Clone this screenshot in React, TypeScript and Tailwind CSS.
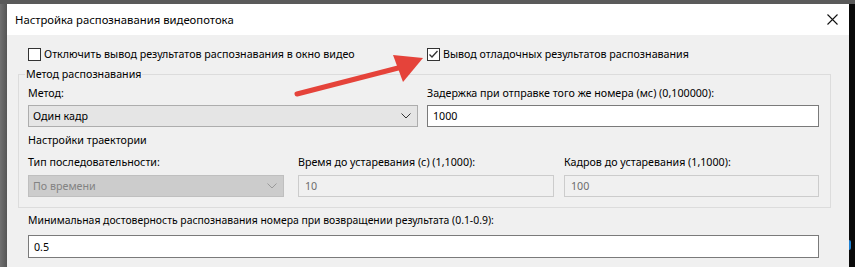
function Chevron({ color }: { color: string }) {
  return (
    <svg width="10" height="6" viewBox="0 0 10 6" className="shrink-0">
      <path d="M0.5 0.5 L5 5 L9.5 0.5" fill="none" stroke={color} strokeWidth="1" />
    </svg>
  );
}

function Check({ checked }: { checked?: boolean }) {
  return (
    <div className="w-[13px] h-[13px] border border-[#333333] bg-white flex items-center justify-center shrink-0">
      {checked && (
        <svg width="11" height="11" viewBox="0 0 11 11">
          <path d="M1.5 5.5 L4 8 L9.5 2" fill="none" stroke="#333333" strokeWidth="1.3" />
        </svg>
      )}
    </div>
  );
}

export default function App() {
  return (
    <div className="relative w-[855px] h-[267px] overflow-hidden bg-[#5a5a5a] font-['Noto_Sans',sans-serif] text-[10.7px] leading-[16px] text-black">
      <div className="h-[4px] bg-[#5a5a5a]" />
      <div className="flex h-[263px]">
        <div className="w-[7px] bg-gradient-to-r from-[#707070] to-[#555555]" />
        <div className="w-[842px] flex flex-col bg-[#f0f0f0]">
          {/* title bar */}
          <div className="h-[31px] bg-white flex items-center justify-between pl-[8px] pr-[11px] shrink-0">
            <span className="text-[11.3px]">Настройка распознавания видеопотока</span>
            <svg width="11" height="11" viewBox="0 0 11 11">
              <path d="M0.5 0.5 L10.5 10.5 M10.5 0.5 L0.5 10.5" stroke="#111" strokeWidth="1.1" />
            </svg>
          </div>

          {/* checkboxes */}
          <div className="flex items-center h-[16px] mt-[11px]">
            <div className="flex items-center gap-[3px] pl-[21px] w-[420px]">
              <Check />
              <span>Отключить вывод результатов распознавания в окно видео</span>
            </div>
            <div className="flex items-center gap-[3px]">
              <Check checked />
              <span>Вывод отладочных результатов распознавания</span>
            </div>
          </div>

          {/* group */}
          <fieldset className="ml-[11px] mt-[4px] w-[813px] border border-[#dcdcdc] pl-[9px] pr-[11px] pt-[3px] pb-[10px]">
            <legend className="px-[1px] -ml-[3px] leading-[16px]">Метод распознавания</legend>
            <div className="flex gap-[9px]">
              <div className="w-[390px] flex flex-col">
                <span>Метод:</span>
                <div className="mt-[4px] h-[22px] bg-[#e5e5e5] border border-[#adadad] flex items-center justify-between pl-[4px] pr-[6px]">
                  <span>Один кадр</span>
                  <Chevron color="#333333" />
                </div>
              </div>
              <div className="w-[392px] flex flex-col">
                <span>Задержка при отправке того же номера (мс) (0,100000):</span>
                <div className="mt-[4px] h-[22px] bg-white border border-[#7a7a7a] flex items-center pl-[5px]">
                  <span>1000</span>
                </div>
              </div>
            </div>
            <div className="mt-[5px]">Настройки траектории</div>
            <div className="mt-[6px] flex">
              <div className="w-[256px] flex flex-col">
                <span>Тип последовательности:</span>
                <div className="mt-[5px] h-[22px] bg-[#cccccc] border border-[#bfbfbf] flex items-center justify-between pl-[4px] pr-[6px] text-[#838383]">
                  <span>По времени</span>
                  <Chevron color="#9a9a9a" />
                </div>
              </div>
              <div className="w-[256px] ml-[14px] flex flex-col">
                <span>Время до устаревания (с) (1,1000):</span>
                <div className="mt-[5px] h-[22px] bg-[#f0f0f0] border border-[#cccccc] flex items-center pl-[6px] text-[#6d6d6d]">
                  <span>10</span>
                </div>
              </div>
              <div className="w-[255px] ml-[10px] flex flex-col">
                <span>Кадров до устаревания (1,1000):</span>
                <div className="mt-[5px] h-[22px] bg-[#f0f0f0] border border-[#cccccc] flex items-center pl-[6px] text-[#6d6d6d]">
                  <span>100</span>
                </div>
              </div>
            </div>
          </fieldset>

          {/* min confidence */}
          <div className="pl-[21px] mt-[4px] text-[10.4px]">
            Минимальная достоверность распознавания номера при возвращении результата (0.1-0.9):
          </div>
          <div className="ml-[21px] mt-[7px] w-[791px] h-[23px] bg-white border border-[#7a7a7a] flex items-center pl-[5px]">
            <span>0.5</span>
          </div>
        </div>
        <div className="w-[6px] bg-[#0a0a0a] relative">
          <div className="absolute left-0 top-[236px] w-[2px] h-[10px] bg-[#1e7fd0] rounded-r" />
        </div>
      </div>

      {/* red annotation arrow */}
      <svg className="absolute left-0 top-0 pointer-events-none" width="855" height="267" viewBox="0 0 855 267">
        <line x1="297" y1="94" x2="402" y2="67" stroke="#e5433a" strokeWidth="5" strokeLinecap="round" />
        <polygon points="423,58 393,55 403,82" fill="#e5433a" />
      </svg>
    </div>
  );
}
